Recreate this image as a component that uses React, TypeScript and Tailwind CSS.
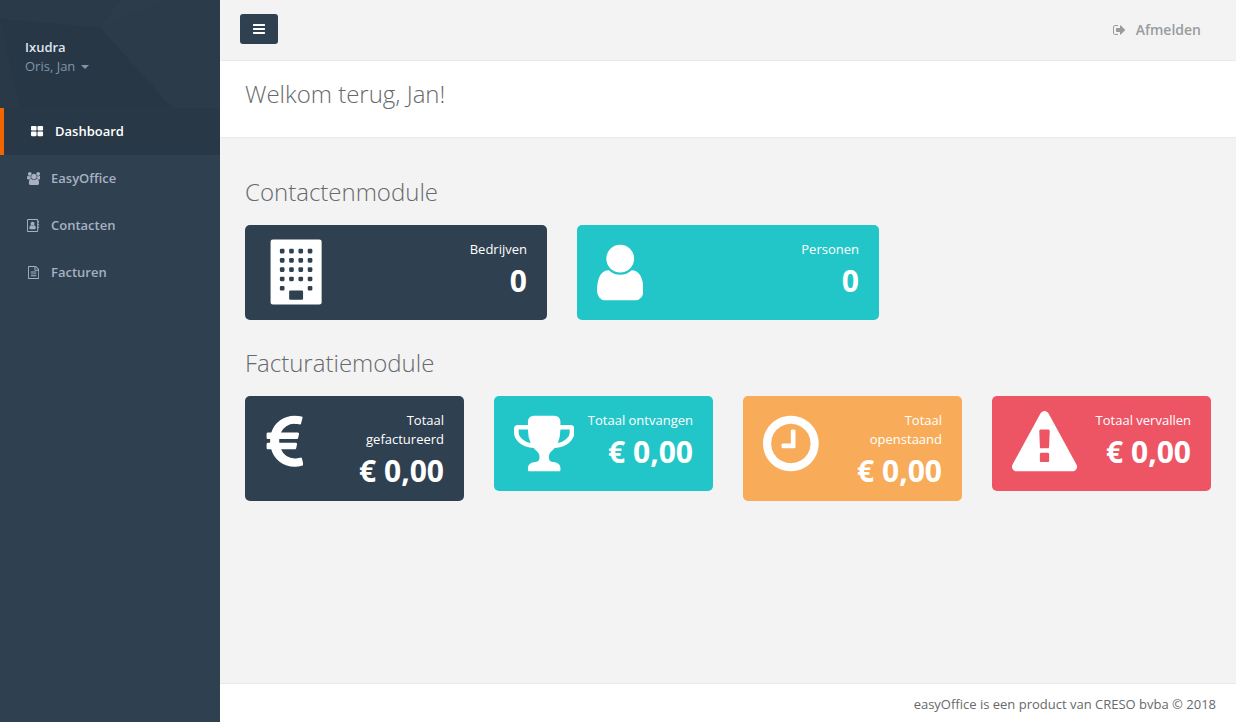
import type { ReactNode } from "react"
import clsx from "clsx"

interface GlyphProps {
  viewBox: string
  className?: string
  children: ReactNode
}

function Glyph({ viewBox, className, children }: GlyphProps) {
  return (
    <svg viewBox={viewBox} fill="currentColor" aria-hidden="true" className={clsx("w-auto max-w-none shrink-0", className)}>
      {children}
    </svg>
  )
}

const SMALL = "h-[13px]"
const LARGE = "h-[65px]"

const BarsIcon = () => (
  <Glyph viewBox="128 0 1536 1792" className="h-[14px]">
    <path d="M1664 1344v128q0 26-19 45t-45 19h-1408q-26 0-45-19t-19-45v-128q0-26 19-45t45-19h1408q26 0 45 19t19 45zm0-512v128q0 26-19 45t-45 19h-1408q-26 0-45-19t-19-45v-128q0-26 19-45t45-19h1408q26 0 45 19t19 45zm0-512v128q0 26-19 45t-45 19h-1408q-26 0-45-19t-19-45v-128q0-26 19-45t45-19h1408q26 0 45 19t19 45z" />
  </Glyph>
)

const SignOutIcon = () => (
  <Glyph viewBox="64 0 1568 1792" className="h-[14px]">
    <path d="M704 1440q0 4 1 20t.5 26.500-3 23.500-10 19.500-20.500 6.500h-320q-119 0-203.500-84.500t-84.500-203.500v-704q0-119 84.500-203.500t203.500-84.500h320q13 0 22.500 9.500t9.500 22.500q0 4 1 20t.5 26.500-3 23.500-10 19.500-20.500 6.500h-320q-66 0-113 47t-47 113v704q0 66 47 113t113 47h312l11.500 1 11.500 3 8 5.500 7 9 2 13.500zm928-544q0 26-19 45l-544 544q-19 19-45 19t-45-19-19-45v-288h-448q-26 0-45-19t-19-45v-384q0-26 19-45t45-19h448v-288q0-26 19-45t45-19 45 19l544 544q19 19 19 45z" />
  </Glyph>
)

const ThLargeIcon = () => (
  <Glyph viewBox="64 0 1664 1792" className={SMALL}>
    <path d="M832 1024v384q0 52-38 90t-90 38h-512q-52 0-90-38t-38-90v-384q0-52 38-90t90-38h512q52 0 90 38t38 90zm0-768v384q0 52-38 90t-90 38h-512q-52 0-90-38t-38-90v-384q0-52 38-90t90-38h512q52 0 90 38t38 90zm896 768v384q0 52-38 90t-90 38h-512q-52 0-90-38t-38-90v-384q0-52 38-90t90-38h512q52 0 90 38t38 90zm0-768v384q0 52-38 90t-90 38h-512q-52 0-90-38t-38-90v-384q0-52 38-90t90-38h512q52 0 90 38t38 90z" />
  </Glyph>
)

const UsersIcon = () => (
  <Glyph viewBox="64 0 1920 1792" className={SMALL}>
    <path d="M657 896q-162 5-265 128h-134q-82 0-138-40.500t-56-118.500q0-353 124-353 6 0 43.500 21t97.500 42.500 119 21.500q67 0 133-23-5 37-5 66 0 139 81 256zm1071 637q0 120-73 189.500t-194 69.500h-874q-121 0-194-69.500t-73-189.500q0-53 3.500-103.500t14-109 26.500-108.500 43-97.500 62-81 85.500-53.500 111.500-20q10 0 43 21.500t73 48 107 48 135 21.500 135-21.500 107-48 73-48 43-21.500q61 0 111.500 20t85.500 53.500 62 81 43 97.500 26.500 108.500 14 109 3.500 103.500zm-1024-1277q0 106-75 181t-181 75-181-75-75-181 75-181 181-75 181 75 75 181zm704 384q0 159-112.500 271.500t-271.500 112.500-271.500-112.500-112.500-271.500 112.500-271.500 271.500-112.500 271.500 112.500 112.500 271.500zm576 225q0 78-56 118.500t-138 40.500h-134q-103-123-265-128 81-117 81-256 0-29-5-66 66 23 133 23 59 0 119-21.500t97.500-42.500 43.500-21q124 0 124 353zm-128-609q0 106-75 181t-181 75-181-75-75-181 75-181 181-75 181 75 75 181z" />
  </Glyph>
)

const AddressBookIcon = () => (
  <Glyph viewBox="0 0 1664 1792" className={SMALL}>
    <path
      fillRule="evenodd"
      d="M160 0h1216q66 0 113 47t47 113v1472q0 66-47 113t-113 47h-1216q-66 0-113-47t-47-113v-1472q0-66 47-113t113-47zm0 128q-32 0-32 32v1472q0 32 32 32h1216q32 0 32-32v-1472q0-32-32-32z"
    />
    <path d="M1028 644q0 107-76.500 183t-183.500 76-183.500-76-76.500-183 76.500-183.500 183.500-76.500 183.500 76.500 76.500 183.500zM980 870q46 0 82.500 17t60 47.500 39.500 67 24 81 11.500 82.500 3.500 79q0 67-39.500 118.500t-105.500 51.500h-576q-66 0-105.500-51.500t-39.500-118.500q0-48 4.500-93.500t18.500-98.500 36.500-91.500 63-64.500 93.500-26h5q7 4 32 19.500t35.500 21 33 17 37 16 35 9 39.500 4.500 39.500-4.500 35-9 37-16 33-17 35.500-21 32-19.500z" />
    <path d="M1536 256h96q32 0 32 32v192q0 32-32 32h-96zM1536 640h96q32 0 32 32v192q0 32-32 32h-96zM1536 1024h96q32 0 32 32v192q0 32-32 32h-96z" />
  </Glyph>
)

const FileTextIcon = () => (
  <Glyph viewBox="128 0 1536 1792" className={SMALL}>
    <path d="M1596 380q28 28 48 76t20 88v1152q0 40-28 68t-68 28h-1344q-40 0-68-28t-28-68v-1600q0-40 28-68t68-28h896q40 0 88 20t76 48zm-444-244v376h376q-10-29-22-41l-313-313q-12-12-41-22zm384 1528v-1024h-416q-40 0-68-28t-28-68v-416h-768v1536h1280zm-1024-864q0-14 9-23t23-9h704q14 0 23 9t9 23v64q0 14-9 23t-23 9h-704q-14 0-23-9t-9-23v-64zm736 224q14 0 23 9t9 23v64q0 14-9 23t-23 9h-704q-14 0-23-9t-9-23v-64q0-14 9-23t23-9h704zm0 256q14 0 23 9t9 23v64q0 14-9 23t-23 9h-704q-14 0-23-9t-9-23v-64q0-14 9-23t23-9h704z" />
  </Glyph>
)

const WINDOW_ROWS = [256, 512, 768, 1024, 1280]
const WINDOW_COLS = [448, 704, 960, 1216]

const BuildingIcon = () => (
  <Glyph viewBox="38 14 1664 1792" className={clsx("overflow-visible", LARGE)}>
    <rect x="192" width="1408" height="1792" rx="64" />
    <g className="fill-[#2f4050]">
      {WINDOW_ROWS.map((y, row) =>
        WINDOW_COLS.map((x, col) =>
          // the door takes the middle of the bottom row
          row === 4 && (col === 1 || col === 2) ? null : (
            <rect key={`${x}-${y}`} x={x} y={y} width="128" height="128" rx="32" />
          )
        )
      )}
      <rect x="704" y="1408" width="384" height="256" rx="32" />
    </g>
  </Glyph>
)

const UserIcon = () => (
  <Glyph viewBox="256 0 1280 1792" className={LARGE}>
    <path d="M1536 1399q0 109-62.500 187t-150.500 78h-854q-88 0-150.500-78t-62.500-187q0-85 8.500-160.500t31.500-152 58.500-131 94-89 134.500-34.500q131 128 313 128t313-128q76 0 134.500 34.500t94 89 58.500 131 31.500 152 8.500 160.500zm-256-887q0 159-112.500 271.500t-271.500 112.500-271.500-112.500-112.500-271.500 112.500-271.500 271.500-112.500 271.500 112.500 112.500 271.500z" />
  </Glyph>
)

const EuroIcon = () => (
  <Glyph viewBox="340 0 1060 1792" className={LARGE}>
    <path d="M1360 1307l35 159q3 12-3 22.500t-17 14.500l-5 1q-4 2-10.500 3.500t-16 4.500-21.500 5.500-25.500 5-30 5-33.500 4.500-36.500 3-38.500 1q-234 0-409-130.500t-238-351.500h-95q-13 0-22.500-9.500t-9.500-22.500v-113q0-13 9.500-22.500t22.500-9.500h66q-2-57 1-105h-67q-14 0-23-9t-9-23v-114q0-14 9-23t23-9h98q67-210 243.500-338t400.500-128q102 0 194 23 11 3 20 15 6 11 3 24l-43 159q-3 13-14 19.500t-24 2.500l-4-1q-4-1-11.500-2.500l-17.500-3.500-22.500-3.500-26-3-29-2.500-29.500-1q-126 0-226 64t-150 176h468q16 0 25 12 10 12 7 26l-24 114q-5 26-32 26h-488q-3 37 0 105h459q15 0 25 12 9 12 6 27l-24 112q-2 11-11 18.500t-20 7.500h-387q48 117 149.500 185.500t228.500 68.500q18 0 36-1.500t33.500-3.500 29.500-4.500 24.500-5 18.500-4.500l12-3 5-2q13-5 26 2 12 7 15 21z" />
  </Glyph>
)

const TrophyIcon = () => (
  <Glyph viewBox="64 0 1664 1792" className={LARGE}>
    <path d="M522 883q-74-162-74-371h-256v96q0 78 94.500 162t235.500 113zm1078-275v-96h-256q0 209-74 371 141-29 235.500-113t94.500-162zm128-128v128q0 71-41.500 143t-112 130-173 97.500-215.500 44.500q-42 54-95 95-38 34-52.500 72.500t-14.500 89.500q0 54 30.500 91t97.500 37q75 0 133.500 45.500t58.500 114.500v64q0 14-9 23t-23 9h-832q-14 0-23-9t-9-23v-64q0-69 58.500-114.500t133.500-45.500q67 0 97.500-37t30.500-91q0-51-14.500-89.500t-52.500-72.500q-53-41-95-95-113-5-215.500-44.500t-173-97.500-112-130-41.500-143v-128q0-40 28-68t68-28h288v-96q0-66 47-113t113-47h576q66 0 113 47t47 113v96h288q40 0 68 28t28 68z" />
  </Glyph>
)

const ClockIcon = () => (
  <Glyph viewBox="128 0 1536 1792" className={LARGE}>
    <path d="M1024 544v448q0 14-9 23t-23 9h-320q-14 0-23-9t-9-23v-64q0-14 9-23t23-9h224v-352q0-14 9-23t23-9h64q14 0 23 9t9 23zm416 352q0-148-73-273t-198-198-273-73-273 73-198 198-73 273 73 273 198 198 273 73 273-73 198-198 73-273zm224 0q0 209-103 385.500t-279.500 279.500-385.500 103-385.500-103-279.500-279.500-103-385.500 103-385.500 279.500-279.500 385.500-103 385.500 103 279.500 279.500 103 385.500z" />
  </Glyph>
)

const WarningIcon = () => (
  <Glyph viewBox="0 0 1792 1792" className={LARGE}>
    <path d="M1024 1375v-190q0-14-9.500-23.500t-22.500-9.500h-192q-13 0-22.500 9.500t-9.500 23.500v190q0 14 9.500 23.500t22.500 9.500h192q13 0 22.500-9.500t9.500-23.500zm-2-374l18-459q0-12-10-19-13-11-24-11h-220q-11 0-24 11-10 7-10 21l17 457q0 10 10 16.500t24 6.500h185q14 0 23.500-6.500t10.500-16.500zm-14-934l768 1408q35 63-2 126-17 29-46.500 46t-63.500 17h-1536q-34 0-63.500-17t-46.500-46q-37-63-2-126l768-1408q17-31 47-49t65-18 65 18 47 49z" />
  </Glyph>
)

const navItems = [
  { label: "Dashboard", icon: <ThLargeIcon />, active: true },
  { label: "EasyOffice", icon: <UsersIcon />, active: false },
  { label: "Contacten", icon: <AddressBookIcon />, active: false },
  { label: "Facturen", icon: <FileTextIcon />, active: false },
]

interface WidgetProps {
  label: string
  value: string
  icon: ReactNode
  color: string
}

function Widget({ label, value, icon, color }: WidgetProps) {
  return (
    <div className={clsx("grid grid-cols-3 gap-x-[30px] rounded-[5px] px-5 py-[15px] text-white", color)}>
      <div className="flex">{icon}</div>
      <div className="col-span-2 text-right">
        <p className="font-medium leading-[19px]">{label}</p>
        <p className="mt-[6px] text-[30px] font-bold leading-[31px]">{value}</p>
      </div>
    </div>
  )
}

function Sidebar() {
  return (
    <nav className="w-[220px] shrink-0 bg-[#2f4050]">
      <div className="relative h-[108px] overflow-hidden bg-[#293846] px-[25px] pt-[38px] leading-[19px]">
        {/* faceted backdrop */}
        <svg viewBox="0 0 220 108" preserveAspectRatio="none" aria-hidden="true" className="absolute inset-0 h-full w-full">
          <path d="M0 0H120L100 28L0 19Z" fill="#2a3a48" />
          <path d="M120 0H220V108H172L100 28Z" fill="#2b3b49" />
          <path d="M100 28L165 0H120Z" fill="#2c3c4b" />
          <path d="M0 19L100 28L172 108H20L0 60Z" fill="#283746" />
          <path d="M0 19L20 108H0Z" fill="#293947" />
        </svg>
        <div className="relative">
          <p className="font-semibold text-[#dfe4ed]">Ixudra</p>
          <button type="button" className="flex items-center gap-[6px] text-[#8095a8]">
            Oris, Jan
            <span className="border-x-4 border-t-4 border-x-transparent border-t-current" />
          </button>
        </div>
      </div>
      <ul>
        {navItems.map((item) => (
          <li key={item.label} className={clsx(item.active && "border-l-4 border-[#f26500] bg-[#293846]")}>
            <a
              href="#"
              className={clsx(
                "flex items-center gap-[9px] px-[25px] py-[14px] font-semibold leading-[19px]",
                item.active ? "text-white" : "text-[#a7b1c2]"
              )}
            >
              <span className="flex w-[17px] justify-center">{item.icon}</span>
              {item.label}
            </a>
          </li>
        ))}
      </ul>
    </nav>
  )
}

export default function App() {
  return (
    <div className="flex min-h-screen bg-[#2f4050] font-['Open_Sans',sans-serif] text-[13px] text-[#676a6c]">
      <Sidebar />
      <div className="flex min-w-0 flex-1 flex-col bg-[#f3f3f4]">
        <header className="flex items-start justify-between border-b border-[#e7eaec] pb-[14px] pl-5 pr-[35px] pt-[14px]">
          <button
            type="button"
            aria-label="Menu"
            className="flex h-[30px] w-[38px] items-center justify-center rounded-[3px] bg-[#2f4050] text-white"
          >
            <BarsIcon />
          </button>
          <a href="#" className="flex items-center gap-[10px] text-sm font-semibold leading-[32px] text-[#999c9e]">
            <SignOutIcon />
            Afmelden
          </a>
        </header>

        <div className="border-b border-[#e7eaec] bg-white px-[25px] pb-[30px] pt-5">
          <h1 className="text-2xl font-light leading-[26px]">Welkom terug, Jan!</h1>
        </div>

        <main className="flex-1 px-[25px] pt-[41px]">
          <section>
            <h2 className="text-2xl font-light leading-[26px]">Contactenmodule</h2>
            <div className="mt-5 grid grid-cols-3 items-start gap-[30px]">
              <Widget label="Bedrijven" value="0" icon={<BuildingIcon />} color="bg-[#2f4050]" />
              <Widget label="Personen" value="0" icon={<UserIcon />} color="bg-[#23c6c8]" />
            </div>
          </section>
          <section className="mt-[30px]">
            <h2 className="text-2xl font-light leading-[26px]">Facturatiemodule</h2>
            <div className="mt-5 grid grid-cols-4 items-start gap-[30px]">
              <Widget label="Totaal gefactureerd" value="€ 0,00" icon={<EuroIcon />} color="bg-[#2f4050]" />
              <Widget label="Totaal ontvangen" value="€ 0,00" icon={<TrophyIcon />} color="bg-[#23c6c8]" />
              <Widget label="Totaal openstaand" value="€ 0,00" icon={<ClockIcon />} color="bg-[#f8ac59]" />
              <Widget label="Totaal vervallen" value="€ 0,00" icon={<WarningIcon />} color="bg-[#ed5565]" />
            </div>
          </section>
        </main>

        <footer className="border-t border-[#e7eaec] bg-white px-5 pb-[9px] pt-[11px] text-right leading-[18px]">
          easyOffice is een product van CRESO bvba © 2018
        </footer>
      </div>
    </div>
  )
}
